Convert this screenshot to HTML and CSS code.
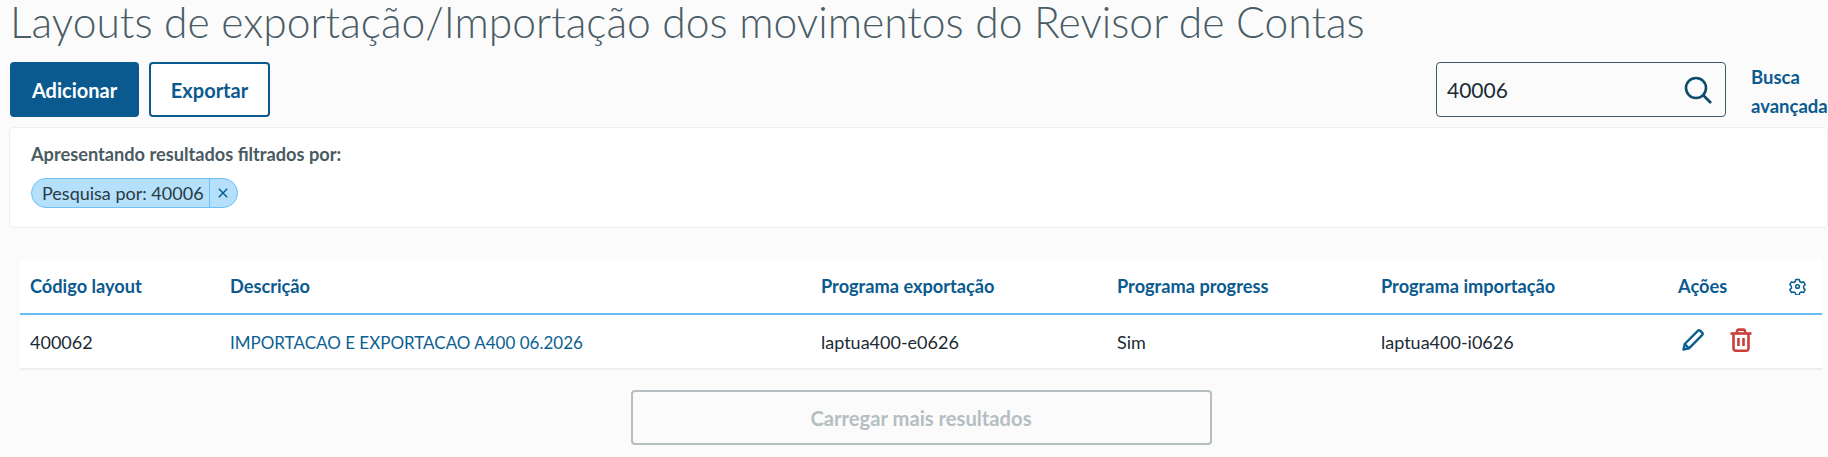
FILE: index.html
```html
<!DOCTYPE html>
<html lang="pt">
<head>
<meta charset="utf-8">
<title>Layouts</title>
<link rel="stylesheet" href="styles.css">
</head>
<body>
<h1 class="title">Layouts de exportação/Importação dos movimentos do Revisor de Contas</h1>
<div class="toolbar">
  <div class="actions">
    <button class="btn btn-primary">Adicionar</button>
    <button class="btn btn-secondary">Exportar</button>
  </div>
  <div class="search">
    <div class="search-box">
      <span class="search-value">40006</span>
      <svg class="search-icon" viewBox="0 0 28 28" width="28" height="28"><circle cx="12" cy="12" r="10" fill="none" stroke="#0c4a6e" stroke-width="2.6"/><path d="M19 19l8 8" stroke="#0c4a6e" stroke-width="2.6" fill="none"/></svg>
    </div>
    <a class="adv-link">Busca avançada</a>
  </div>
</div>
<section class="filter-card">
  <div class="filter-label">Apresentando resultados filtrados por:</div>
  <div class="tag">
    <span class="tag-text">Pesquisa por: 40006</span>
    <span class="tag-close"><svg viewBox="0 0 10 10" width="12" height="12"><path d="M1.5 1.5l7 7M8.5 1.5l-7 7" stroke="#0c5a8a" stroke-width="1.2" fill="none"/></svg></span>
  </div>
</section>
<section class="table-wrap">
  <div class="row head">
    <div class="c1">Código layout</div>
    <div class="c2">Descrição</div>
    <div class="c3">Programa exportação</div>
    <div class="c4">Programa progress</div>
    <div class="c5">Programa importação</div>
    <div class="c6">Ações</div>
    <div class="c7"><svg viewBox="0 0 24 24" width="17" height="17" fill="none" stroke="#0b5f92" stroke-width="2.2" stroke-linejoin="round"><path d="M9.6 2.5h4.8l.7 3 2.4 1.4 3-.9 2.3 4-2.2 2.1v2.8l2.2 2.1-2.3 4-3-.9-2.4 1.4-.7 3H9.6l-.7-3-2.4-1.4-3 .9-2.3-4 2.2-2.1v-2.8L1.2 10l2.3-4 3 .9 2.4-1.4z" transform="translate(0 -.5)"/><circle cx="12" cy="12" r="2.6"/></svg></div>
  </div>
  <div class="row body">
    <div class="c1">400062</div>
    <div class="c2 link">IMPORTACAO E EXPORTACAO A400 06.2026</div>
    <div class="c3">laptua400-e0626</div>
    <div class="c4">Sim</div>
    <div class="c5">laptua400-i0626</div>
    <div class="c6 icons">
      <svg viewBox="0 0 24 24" width="24" height="24" fill="none" stroke="#0b5f92" stroke-width="2.4" stroke-linejoin="round"><path d="M2.5 21.5l1.2-5.5L16.8 2.9a1.8 1.8 0 0 1 2.5 0l1.8 1.8a1.8 1.8 0 0 1 0 2.5L8 20.3z"/><path d="M3.7 16l4.3 4.3"/></svg>
      <svg viewBox="0 0 24 24" width="24" height="24" fill="none" stroke="#c9403a" stroke-width="2.6"><path d="M1.5 5.5h21"/><path d="M8 5V3.2A1.6 1.6 0 0 1 9.6 1.6h4.8A1.6 1.6 0 0 1 16 3.2V5" /><path d="M4.5 5.5v15a2.2 2.2 0 0 0 2.2 2.2h10.6a2.2 2.2 0 0 0 2.2-2.2v-15"/><path d="M9.5 10v8M14.5 10v8"/></svg>
    </div>
    <div class="c7"></div>
  </div>
</section>
<div class="more-wrap">
  <button class="btn-more" disabled>Carregar mais resultados</button>
</div>
</body>
</html>
```

FILE: styles.css
```css
* { box-sizing: border-box; }
html, body { margin: 0; padding: 0; }
body {
  width: 1828px;
  height: 457px;
  overflow: hidden;
  background: #fbfbfb;
  font-family: "Lato", "Open Sans", sans-serif;
  color: #1c2b33;
}
.title {
  margin: 0;
  padding: 0 0 0 10px;
  height: 62px;
  font-size: 42.6px;
  line-height: 43px;
  font-weight: 300;
  color: #4a5c66;
  white-space: nowrap;
}
.toolbar {
  display: flex;
  justify-content: space-between;
  padding-left: 10px;
  height: 55px;
}
.actions { display: flex; gap: 10px; }
.btn {
  height: 55px;
  border-radius: 4px;
  font-family: inherit;
  font-size: 20px;
  font-weight: 700;
  cursor: pointer;
}
.btn-primary {
  width: 129px;
  background: #0b5a8f;
  border: 2px solid #0b5a8f;
  color: #fff;
}
.btn-secondary {
  width: 121px;
  background: #fff;
  border: 2px solid #0b5a8f;
  color: #0b5a8f;
}
.search { display: flex; }
.search-box {
  width: 290px;
  height: 55px;
  border: 1px solid #3f5a66;
  border-radius: 4px;
  background: #fbfbfb;
  display: flex;
  align-items: center;
  justify-content: space-between;
  padding: 0 13px 0 10px;
  font-size: 21px;
}
.search-value { color: #1c2b33; }
.adv-link {
  display: block;
  width: 77px;
  margin-left: 25px;
  padding-top: 1px;
  font-size: 18.5px;
  font-weight: 700;
  line-height: 29px;
  color: #0b5a8f;
  white-space: normal;
}
.filter-card {
  margin: 10px 0 0 9px;
  height: 101px;
  background: #fff;
  border: 1px solid #eeeeee;
  border-radius: 4px;
  padding: 15px 0 0 21px;
}
.filter-label {
  font-size: 18.2px;
  font-weight: 700;
  line-height: 22px;
  color: #4a5a62;
}
.tag {
  margin-top: 13px;
  display: inline-flex;
  height: 30px;
  border: 1px solid #6dc0f5;
  border-radius: 15px;
  background: #b4e0fc;
  overflow: hidden;
  font-size: 18px;
  line-height: 28px;
  color: #2a3a42;
}
.tag-text { padding: 0 5px 0 10px; border-right: 1px solid #6dc0f5; }
.tag-close {
  width: 27px;
  display: flex;
  align-items: center;
  justify-content: center;
}
.table-wrap {
  margin: 31px 6px 0 20px;
  background: #fff;
}
.row {
  display: grid;
  grid-template-columns: 200px 591px 296px 264px 297px 111px 1fr;
  padding-left: 10px;
  align-items: center;
  font-size: 18px;
}
.row.head {
  height: 56px;
  border-bottom: 2px solid #66bdf5;
  font-size: 18.2px;
  font-weight: 700;
  color: #0b5a8f;
}
.row.body {
  height: 55px;
  border-bottom: 2px solid #eeeeee;
  color: #1c2b33;
}
.link { color: #0b5f92; font-size: 17px; padding-top: 1px; }
.c7 { display: flex; }
.icons { display: flex; gap: 24px; align-items: center; margin-top: -4px; padding-left: 3px; }
.more-wrap {
  display: flex;
  justify-content: center;
  margin-top: 20px;
  padding-left: 14px;
}
.btn-more {
  width: 581px;
  height: 55px;
  background: #fbfbfb;
  border: 2px solid #b5bec1;
  border-radius: 4px;
  font-family: inherit;
  font-size: 20.2px;
  font-weight: 700;
  color: #b5bec1;
}
```
